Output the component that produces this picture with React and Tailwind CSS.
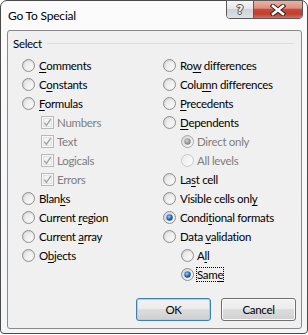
import React from "react";

function Radio({ checked, disabled, dim }) {
  const ring = dim ? "#c6c6c6" : disabled ? "#a9a9a9" : "#8e8f8f";
  return (
    <svg width="13" height="13" viewBox="0 0 13 13" className="shrink-0">
      <defs>
        <linearGradient id="rbg" x1="0" y1="0" x2="1" y2="1">
          <stop offset="0" stopColor="#cdcdcd" />
          <stop offset="1" stopColor="#ffffff" />
        </linearGradient>
        <linearGradient id="rin" x1="0" y1="0" x2="1" y2="1">
          <stop offset="0" stopColor="#e4e4e4" />
          <stop offset="1" stopColor="#fbfbfb" />
        </linearGradient>
        <linearGradient id="rdim" x1="0" y1="0" x2="1" y2="1">
          <stop offset="0" stopColor="#ececec" />
          <stop offset="1" stopColor="#fbfbfb" />
        </linearGradient>
        <radialGradient id="rdot" cx="0.42" cy="0.38" r="0.6">
          <stop offset="0" stopColor="#a8dcfb" />
          <stop offset="0.45" stopColor="#3f86d6" />
          <stop offset="1" stopColor="#0d3b86" />
        </radialGradient>
        <radialGradient id="rgray" cx="0.42" cy="0.38" r="0.6">
          <stop offset="0" stopColor="#d8d8d8" />
          <stop offset="0.5" stopColor="#a6a6a6" />
          <stop offset="1" stopColor="#7d7d7d" />
        </radialGradient>
      </defs>
      <circle cx="6.5" cy="6.5" r="6" fill={dim ? "url(#rdim)" : "url(#rbg)"} stroke={ring} strokeWidth="1" />
      <circle cx="6.5" cy="6.5" r="4" fill={dim ? "url(#rdim)" : "url(#rin)"} />
      {checked && (
        <circle cx="6.5" cy="6.5" r="3.2" fill={disabled ? "url(#rgray)" : "url(#rdot)"} />
      )}
    </svg>
  );
}

function Check() {
  return (
    <svg width="13" height="13" viewBox="0 0 13 13" className="shrink-0">
      <rect x="0.5" y="0.5" width="12" height="12" fill="#f7f7f7" stroke="#b9b9b9" />
      <rect x="2.5" y="2.5" width="8" height="8" fill="#f3f3f3" stroke="#e2e2e2" />
      <path d="M3.3 6.6 L5.4 9.4 L9.8 3.2" fill="none" stroke="#a2a2a2" strokeWidth="1.4" />
    </svg>
  );
}

function Label({ pre = "", u = "", post = "", disabled, focus }) {
  return (
    <span
      className={`whitespace-nowrap leading-[13px] ${disabled ? "text-[#7e7e7e]" : "text-black"} ${
        focus ? "border border-dotted border-black -ml-px -my-px" : ""
      }`}
    >
      {pre}
      {u && <span className="underline underline-offset-[2px] decoration-1">{u}</span>}
      {post}
    </span>
  );
}

function Item({ kind = "radio", checked, disabled, dim, indent, gap, focus, ...label }) {
  return (
    <div className={`h-[19px] flex items-center ${indent || ""} ${gap || "gap-[4px]"}`}>
      {kind === "check" ? <Check /> : <Radio checked={checked} disabled={disabled} dim={dim} />}
      <Label {...label} disabled={disabled} focus={focus} />
    </div>
  );
}

function Btn({ children, def }) {
  return (
    <div
      className={`w-[75px] h-[23px] flex items-center justify-center rounded-[3px] border text-black bg-[linear-gradient(to_bottom,#f2f2f2_0%,#ebebeb_50%,#dddddd_50%,#cfcfcf_100%)] ${
        def
          ? "border-[#3c7fb1] shadow-[inset_0_0_0_1px_#8fdcf8]"
          : "border-[#707070] shadow-[inset_0_0_0_1px_#fbfbfb]"
      }`}
    >
      {children}
    </div>
  );
}

export default function App() {
  return (
    <div className="w-[308px] h-[335px] bg-white font-['Lato',sans-serif] text-[11.5px] tracking-[-0.3px]">
      <div className="w-[308px] h-[334px] flex flex-col border border-[#4a4a4a] rounded-t-[7px] rounded-b-[4px] bg-[linear-gradient(to_bottom,#fbfbfc,#f4f5f7)]">
        {/* title bar */}
        <div className="h-[29px] flex items-start shrink-0">
          <div className="self-center pl-[7px] text-black leading-[15px] text-[12px] tracking-[-0.2px]">Go To Special</div>
          <div className="ml-auto mr-[4px] -mt-px flex h-[19px] border border-[#5a5a5a] rounded-b-[4px] overflow-hidden">
            <div className="w-[27px] flex items-center justify-center bg-[linear-gradient(to_bottom,#f6f7f8_0%,#e3e6e9_45%,#cfd3d8_50%,#dde0e4_100%)] border-r border-[#5a5a5a]">
              <span className="font-['DejaVu_Sans',sans-serif] font-bold text-[12px] leading-[12px] tracking-normal text-[#f4f4f4] [text-shadow:1px_0_#4a4a4a,-1px_0_#4a4a4a,0_1px_#4a4a4a,0_-1px_#4a4a4a]">
                ?
              </span>
            </div>
            <div className="w-[48px] flex items-center justify-center bg-[linear-gradient(to_bottom,#ebb2a6_0%,#dc9181_42%,#c54a3b_50%,#c13e30_75%,#d56c5c_100%)]">
              <svg width="16" height="12" viewBox="0 0 16 12">
                <path d="M3 2 L13 10 M13 2 L3 10" stroke="#3b2420" strokeWidth="4.6" strokeLinecap="square" />
                <path d="M3 2 L13 10 M13 2 L3 10" stroke="#ffffff" strokeWidth="2.6" strokeLinecap="square" />
              </svg>
            </div>
          </div>
        </div>

        {/* client */}
        <div className="ml-[6px] mr-[5px] h-[299px] shrink-0 flex flex-col border border-[#8a8a8a] rounded-[3px] bg-[#f0f0f0]">
          <div className="mt-[5px] h-[15px] flex items-center pl-[5px] pr-[7px]">
            <span className="text-black leading-[15px]">Select</span>
            <div className="ml-[5px] flex-1 h-px bg-[#d5dfe5]" />
          </div>

          <div className="mt-[5px] pl-[14px] flex">
            <div className="w-[141px] flex flex-col">
              <Item u="C" post="omments" />
              <Item pre="C" u="o" post="nstants" />
              <Item u="F" post="ormulas" />
              <Item kind="check" indent="pl-[19px]" gap="gap-[3px]" disabled pre="Numbers" />
              <Item kind="check" indent="pl-[19px]" gap="gap-[3px]" disabled pre="Text" />
              <Item kind="check" indent="pl-[19px]" gap="gap-[3px]" disabled pre="Logicals" />
              <Item kind="check" indent="pl-[19px]" gap="gap-[3px]" disabled pre="Errors" />
              <Item pre="Blan" u="k" post="s" />
              <Item pre="Current " u="r" post="egion" />
              <Item pre="Current " u="a" post="rray" />
              <Item pre="O" u="b" post="jects" />
            </div>
            <div className="flex flex-col">
              <Item pre="Ro" u="w" post=" differences" />
              <Item pre="Colu" u="m" post="n differences" />
              <Item u="P" post="recedents" />
              <Item u="D" post="ependents" />
              <Item indent="pl-[18px]" gap="gap-[3px]" checked disabled pre="Direct only" />
              <Item indent="pl-[18px]" gap="gap-[3px]" disabled dim pre="All levels" />
              <Item pre="La" u="s" post="t cell" />
              <Item pre="Visible cells onl" u="y" />
              <Item checked pre="Condi" u="t" post="ional formats" />
              <Item pre="Data " u="v" post="alidation" />
              <Item indent="pl-[18px]" gap="gap-[3px]" pre="A" u="l" post="l" />
              <Item indent="pl-[18px]" gap="gap-[3px]" checked focus pre="Sam" u="e" />
            </div>
          </div>

          <div className="mt-[14px] flex justify-end gap-[10px] pr-[5px]">
            <Btn def>OK</Btn>
            <Btn>Cancel</Btn>
          </div>
        </div>
      </div>
    </div>
  );
}
